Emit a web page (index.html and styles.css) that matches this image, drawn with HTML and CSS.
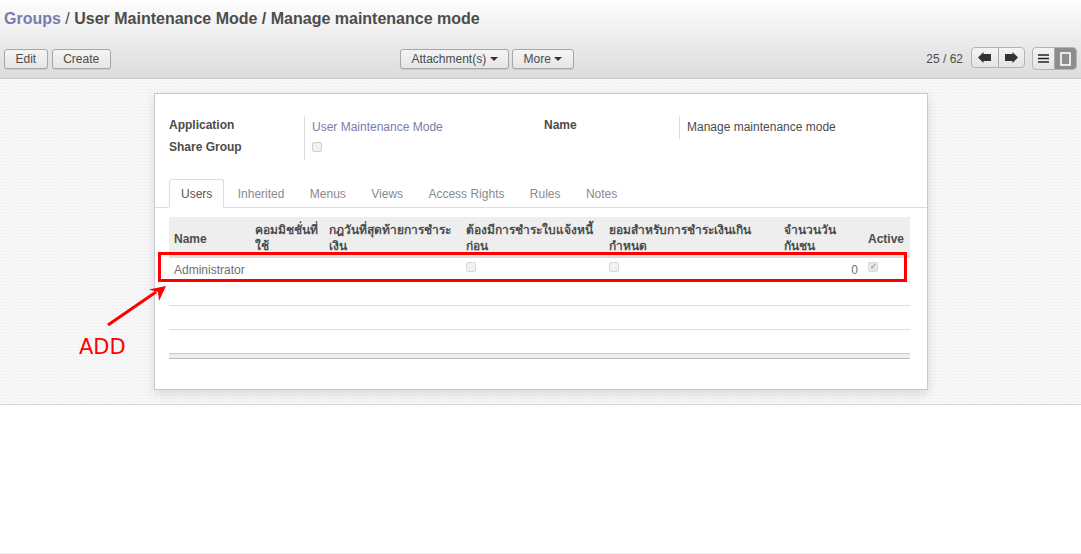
FILE: index.html
```html
<!DOCTYPE html>
<html lang="th">
<head>
  <meta charset="UTF-8" />
  <title>Groups / User Maintenance Mode / Manage maintenance mode</title>
  <link rel="stylesheet" href="styles.css">
</head>
<body>
  <div class="control-panel">
    <h1 class="breadcrumb"><a href="#">Groups</a> <span class="sep">/</span> User Maintenance Mode / Manage maintenance mode</h1>
    <div class="toolbar">
      <div class="toolbar-left">
        <button class="btn">Edit</button>
        <button class="btn">Create</button>
      </div>
      <div class="toolbar-mid">
        <button class="btn">Attachment(s) <span class="caret"></span></button>
        <button class="btn">More <span class="caret"></span></button>
      </div>
      <div class="toolbar-right">
        <span class="pager-text">25 / 62</span>
        <div class="btn-group pager">
          <button class="btn-icon">
            <svg width="13" height="11" viewBox="0 0 13 11"><path d="M0 5.5 L5.5 0 V2 H13 V9 H5.5 V11 Z" fill="#333"/></svg>
          </button>
          <button class="btn-icon">
            <svg width="13" height="11" viewBox="0 0 13 11"><path d="M13 5.5 L7.5 0 V2 H0 V9 H7.5 V11 Z" fill="#333"/></svg>
          </button>
        </div>
        <div class="btn-group switcher">
          <button class="btn-icon">
            <svg width="11" height="9" viewBox="0 0 11 9"><path d="M0 1 H11 M0 4.5 H11 M0 8 H11" stroke="#222" stroke-width="1.4"/></svg>
          </button>
          <button class="btn-icon active">
            <svg width="11" height="14" viewBox="0 0 11 14"><rect x="1" y="1" width="9" height="12" fill="#8d8d8d" stroke="#fff" stroke-width="1.6"/></svg>
          </button>
        </div>
      </div>
    </div>
  </div>

  <div class="content">
    <div class="sheet">
      <div class="group-row">
        <div class="group-col">
          <div class="labels">
            <div class="label">Application</div>
            <div class="label">Share Group</div>
          </div>
          <div class="values">
            <a class="value link" href="#">User Maintenance Mode</a>
            <span class="check"></span>
          </div>
        </div>
        <div class="group-col">
          <div class="labels">
            <div class="label">Name</div>
          </div>
          <div class="values name-value">
            <span class="value">Manage maintenance mode</span>
          </div>
        </div>
      </div>

      <ul class="tabs">
        <li class="tab active">Users</li>
        <li class="tab">Inherited</li>
        <li class="tab">Menus</li>
        <li class="tab">Views</li>
        <li class="tab">Access Rights</li>
        <li class="tab">Rules</li>
        <li class="tab">Notes</li>
      </ul>

      <table class="list">
        <colgroup>
          <col class="c-name"><col class="c-comm"><col class="c-rule"><col class="c-inv"><col class="c-over"><col class="c-days"><col class="c-active">
        </colgroup>
        <thead>
          <tr>
            <th class="latin">Name</th>
            <th>คอมมิชชั่นที่ใช้</th>
            <th>กฎวันที่สุดท้ายการชำระเงิน</th>
            <th>ต้องมีการชำระใบแจ้งหนี้ก่อน</th>
            <th>ยอมสำหรับการชำระเงินเกินกำหนด</th>
            <th>จำนวนวันกันชน</th>
            <th class="latin">Active</th>
          </tr>
        </thead>
        <tbody>
          <tr>
            <td>Administrator</td>
            <td></td>
            <td></td>
            <td><span class="check"></span></td>
            <td><span class="check"></span></td>
            <td class="num">0</td>
            <td><span class="check checked">✓</span></td>
          </tr>
          <tr><td colspan="7"></td></tr>
          <tr><td colspan="7"></td></tr>
          <tr class="last"><td colspan="7"></td></tr>
        </tbody>
        <tfoot>
          <tr><td colspan="7"></td></tr>
        </tfoot>
      </table>
    </div>

    <div class="mark-box"></div>
    <svg class="mark-arrow" width="62" height="44" viewBox="0 0 62 44">
      <path d="M2 41 L50 8" stroke="#f00" stroke-width="3"/>
      <path d="M60 2 L43 5.5 L52 8 L53 17 Z" fill="#f00"/>
    </svg>
    <div class="mark-text">ADD</div>
  </div>

  <div class="bottom"></div>
</body>
</html>
```

FILE: styles.css
```css
* {
  box-sizing: border-box;
}
html, body {
  height: 100%;
}
body {
  margin: 0;
  font-family: "Liberation Sans", Arial, "Noto Sans", sans-serif;
  font-size: 12px;
  color: #4c4c4c;
  background: #fff;
  display: flex;
  flex-direction: column;
  overflow: hidden;
}
a {
  color: #7c7bad;
  text-decoration: none;
}

/* top bar */
.control-panel {
  height: 79px;
  padding: 0 4px;
  background: linear-gradient(#fdfdfd, #dcdcdc);
  border-bottom: 1px solid #cacaca;
}
.breadcrumb {
  margin: 0;
  padding-top: 10px;
  height: 49px;
  font-size: 16px;
  line-height: 18px;
  font-weight: bold;
  color: #4c4c4c;
}
.breadcrumb .sep {
  font-weight: normal;
}
.toolbar {
  display: flex;
  align-items: flex-start;
  height: 22px;
}
.toolbar-left, .toolbar-mid {
  display: flex;
  gap: 3px;
}
.toolbar-left {
  width: 396px;
  gap: 4px;
}
.toolbar-right {
  margin-left: auto;
  margin-top: -2px;
  display: flex;
  align-items: flex-start;
}
.btn {
  height: 20px;
  padding: 0 10.5px;
  font: 12px "Liberation Sans", Arial, sans-serif;
  color: #4c4c4c;
  background: linear-gradient(#f4f4f4, #e6e6e6);
  border: 1px solid #a6a6a6;
  border-radius: 3px;
  box-shadow: 0 1px 1px rgba(0, 0, 0, 0.1);
}
.caret {
  display: inline-block;
  width: 0;
  height: 0;
  vertical-align: 2px;
  border-top: 4px solid #333;
  border-left: 4px solid transparent;
  border-right: 4px solid transparent;
}
.pager-text {
  margin-right: 8px;
  font-size: 12px;
  line-height: 24px;
}
.btn-group {
  display: flex;
  height: 21px;
  border: 1px solid #b4b4b4;
  border-radius: 4px;
  overflow: hidden;
  background: linear-gradient(#f4f4f4, #e4e4e4);
}
.pager {
  width: 54px;
  margin-right: 7px;
}
.switcher {
  width: 45px;
  height: 23px;
}
.btn-icon {
  flex: 1;
  padding: 0;
  border: 0;
  background: transparent;
  display: flex;
  align-items: center;
  justify-content: center;
}
.btn-icon + .btn-icon {
  border-left: 1px solid #aaa;
}
.btn-icon.active {
  background: #8d8d8d;
}

/* form area */
.content {
  position: relative;
  height: 326px;
  padding-top: 14px;
  border-bottom: 1px solid #d8d8d8;
  background-color: #f7f7f7;
  background-image: radial-gradient(#ececec 0.6px, transparent 0.7px);
  background-size: 3px 3px;
}
.sheet {
  width: 774px;
  height: 297px;
  margin-left: 154px;
  padding: 0 17px 0 14px;
  background: #fff;
  border: 1px solid #c8c8d3;
  box-shadow: 0 4px 10px rgba(0, 0, 0, 0.12);
}
.group-row {
  display: flex;
  padding-top: 23px;
  height: 85px;
}
.group-col {
  display: flex;
  flex: none;
  width: 375px;
}
.group-col + .group-col {
  width: 366px;
}
.labels {
  width: 135px;
  font-weight: bold;
}
.label {
  height: 22px;
  line-height: 16px;
  font-size: 12px;
}
.values {
  display: flex;
  flex-direction: column;
  align-items: flex-start;
  height: 44px;
  margin-top: -1px;
  padding-top: 1px;
  padding-left: 7px;
  border-left: 1px solid #dcdcdc;
  font-size: 12px;
}
.name-value {
  height: 23px;
}
.value {
  height: 22px;
  line-height: 20px;
}
.check {
  display: inline-block;
  width: 10px;
  height: 10px;
  margin-top: 4px;
  border: 1px solid #d8d8d8;
  border-radius: 2px;
  background: #f1f1f1;
  font-size: 8px;
  line-height: 8px;
  text-align: center;
}
.values .check {
  margin-top: 3px;
  border-color: #ccc;
}
.check.checked {
  background: #e8e8e8;
  color: #999;
  font-weight: bold;
}

/* tabs */
.tabs {
  display: flex;
  margin: 0 -17px 0 -14px;
  padding: 0 0 0 14px;
  height: 29px;
  list-style: none;
  border-bottom: 1px solid #ddd;
}
.tab {
  height: 29px;
  padding: 0 12px;
  margin-right: 1.4px;
  line-height: 31px;
  font-size: 12px;
  color: #8a8a8a;
}
.tab.active {
  color: #555;
  background: #fff;
  border: 1px solid #ddd;
  border-bottom-color: #fff;
  border-radius: 3px 3px 0 0;
  padding: 0 11px;
  line-height: 29px;
}

/* users table */
.list {
  width: 741px;
  margin-top: 9px;
  border-collapse: separate;
  border-spacing: 0;
  table-layout: fixed;
  font-size: 12px;
}
.c-name { width: 86px; }
.c-comm { width: 74px; }
.c-rule { width: 137px; }
.c-inv { width: 143px; }
.c-over { width: 175px; }
.c-days { width: 79px; }
.c-active { width: 47px; }
.list th {
  height: 38px;
  padding: 5px 5px 0 5px;
  vertical-align: top;
  text-align: left;
  font-weight: bold;
  font-size: 12px;
  line-height: 16px;
  background: #eee;
  overflow: hidden;
  color: #4c4c4c;
}
.list th.latin {
  padding-top: 14px;
}
.list th:nth-child(n+2):nth-child(-n+6) {
  padding-left: 0;
}
.list td {
  height: 24px;
  padding: 0 5px;
  border-bottom: 1px solid #ddd;
  color: #6f6f6f;
  vertical-align: middle;
}
.list tbody tr:first-child td {
  height: 27px;
  border-top: 3px solid #ddd;
}
.list td:nth-child(4), .list td:nth-child(5) {
  padding-left: 0;
  vertical-align: top;
}
.list td:nth-child(7) {
  vertical-align: top;
}
.list tr.last td {
  border-bottom-color: #ccc;
}
.list tfoot td {
  height: 5px;
  padding: 0;
  background: #eee;
  border-bottom: 1px solid #bbb;
}
.list td.num {
  text-align: right;
}

/* red annotation drawn over the screenshot */
.mark-box {
  position: absolute;
  left: 158px;
  top: 173px;
  width: 749px;
  height: 30px;
  border: 3px solid #f00;
}
.mark-arrow {
  position: absolute;
  left: 106px;
  top: 205px;
}
.mark-text {
  position: absolute;
  left: 79px;
  top: 255px;
  font-family: "DejaVu Sans", sans-serif;
  font-size: 21px;
  line-height: 26px;
  color: #f00;
}

.bottom {
  flex: 1;
  border-bottom: 1px solid #eee;
}
```
